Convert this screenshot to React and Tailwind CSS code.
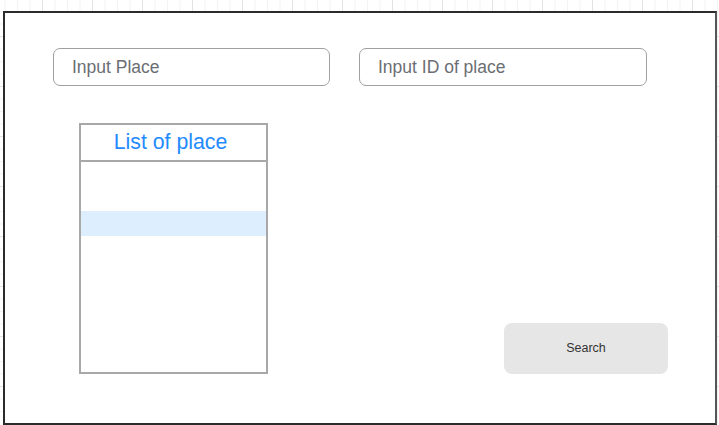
import React from 'react';

export default function App() {
  return (
    <div
      className="w-[719px] h-[425px] overflow-hidden bg-white font-['Liberation_Sans',Arial,sans-serif] bg-[linear-gradient(to_right,#e3e3e3_1px,transparent_1px),linear-gradient(to_bottom,#e3e3e3_1px,transparent_1px),linear-gradient(to_right,#f3f3f3_1px,transparent_1px),linear-gradient(to_bottom,#f3f3f3_1px,transparent_1px)] bg-size-[50px_50px,50px_50px,12.5px_12.5px,12.5px_12.5px] bg-position-[42px_36px,42px_36px,4.5px_-1.5px,4.5px_-1.5px]"
    >
      {/* Frame */}
      <div className="ml-[3px] mt-[11px] w-[714px] h-[414px] border-2 border-[#2b2b2b] border-r-[#555] bg-white pl-[48px] pt-[35px]">
        {/* Inputs */}
        <div className="flex gap-[29px]">
          <div className="w-[277px] h-[38px] border border-[#a0a0a0] rounded-[7px] flex items-center pl-[18px] text-[17.5px] text-[#6b6e73]">
            Input Place
          </div>
          <div className="w-[288px] h-[38px] border border-[#a0a0a0] rounded-[7px] flex items-center pl-[18px] text-[17.5px] text-[#6b6e73]">
            Input ID of place
          </div>
        </div>

        <div className="flex items-end mt-[37px] ml-[26px]">
          {/* List of place */}
          <div className="w-[189px] h-[251px] border-2 border-[#a8a8a8] flex flex-col">
            <div className="h-[37px] border-b-2 border-[#a8a8a8] flex items-center justify-center pr-[6px] text-[21.3px] text-[#1f8bff]">
              List of place
            </div>
            <div className="flex-1 pt-[49px]">
              <div className="h-[25px] bg-[#ddeeff]"></div>
            </div>
          </div>

          {/* Search */}
          <button className="ml-[236px] w-[164px] h-[51px] rounded-[8px] bg-[#e6e6e6] text-[12.5px] text-[#333] flex items-center justify-center">
            Search
          </button>
        </div>
      </div>
    </div>
  );
}
